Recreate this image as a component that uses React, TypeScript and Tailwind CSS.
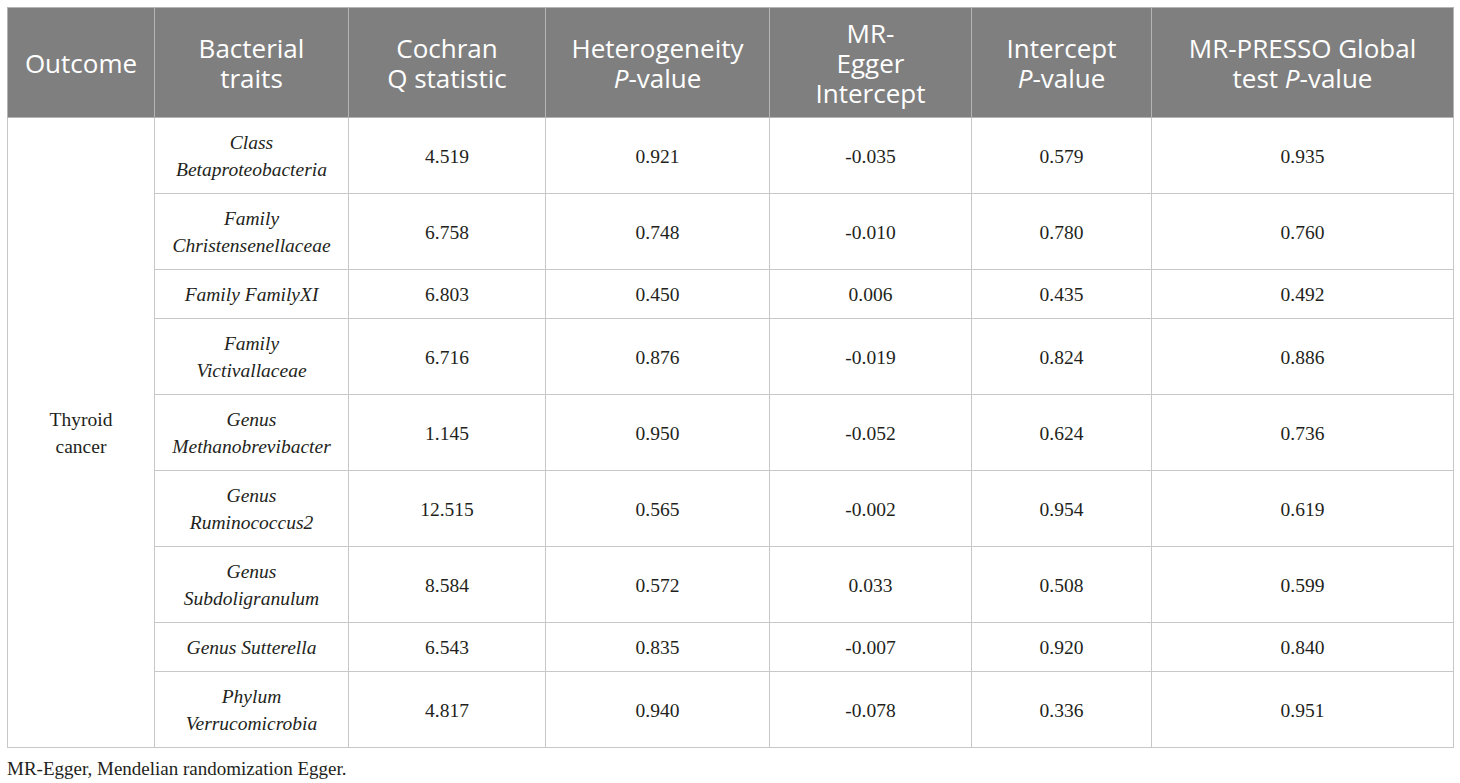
import React from "react";

type Row = { trait: React.ReactNode; q: string; het: string; egg: string; ip: string; presso: string };

const rows: Row[] = [
  { trait: <>Class<br />Betaproteobacteria</>, q: "4.519", het: "0.921", egg: "-0.035", ip: "0.579", presso: "0.935" },
  { trait: <>Family<br />Christensenellaceae</>, q: "6.758", het: "0.748", egg: "-0.010", ip: "0.780", presso: "0.760" },
  { trait: <>Family FamilyXI</>, q: "6.803", het: "0.450", egg: "0.006", ip: "0.435", presso: "0.492" },
  { trait: <>Family<br />Victivallaceae</>, q: "6.716", het: "0.876", egg: "-0.019", ip: "0.824", presso: "0.886" },
  { trait: <>Genus<br />Methanobrevibacter</>, q: "1.145", het: "0.950", egg: "-0.052", ip: "0.624", presso: "0.736" },
  { trait: <>Genus<br />Ruminococcus2</>, q: "12.515", het: "0.565", egg: "-0.002", ip: "0.954", presso: "0.619" },
  { trait: <>Genus<br />Subdoligranulum</>, q: "8.584", het: "0.572", egg: "0.033", ip: "0.508", presso: "0.599" },
  { trait: <>Genus Sutterella</>, q: "6.543", het: "0.835", egg: "-0.007", ip: "0.920", presso: "0.840" },
  { trait: <>Phylum<br />Verrucomicrobia</>, q: "4.817", het: "0.940", egg: "-0.078", ip: "0.336", presso: "0.951" },
];

const th =
  "border border-[#b4b4b4] bg-[#7f7f7f] text-white font-normal text-center align-middle pt-[10px] pb-[9px] px-1 text-[26px] leading-[30px]";
const td =
  "border border-[#c8c8c8] text-center align-middle pt-[11px] pb-[10px] px-1 text-[19.5px] leading-[27px] text-[#231f20]";

export default function App() {
  return (
    <div className="w-[1460px] h-[783px] bg-white pl-[7px] pt-[7px]">
      <table
        className="table-fixed border-collapse w-[1446px] border border-[#c8c8c8]"
        style={{ fontFamily: '"Liberation Serif", serif' }}
      >
        <colgroup>
          <col className="w-[147px]" />
          <col className="w-[194px]" />
          <col className="w-[197px]" />
          <col className="w-[224px]" />
          <col className="w-[202px]" />
          <col className="w-[180px]" />
          <col className="w-[302px]" />
        </colgroup>
        <thead className="font-['Open_Sans',sans-serif]">
          <tr>
            <th className={th}>Outcome</th>
            <th className={th}>Bacterial<br />traits</th>
            <th className={th}>Cochran<br />Q statistic</th>
            <th className={th}>Heterogeneity<br /><i>P</i>-value</th>
            <th className={th}>MR-<br />Egger<br />Intercept</th>
            <th className={th}>Intercept<br /><i>P</i>-value</th>
            <th className={th}>MR-PRESSO Global<br />test <i>P</i>-value</th>
          </tr>
        </thead>
        <tbody>
          {rows.map((r, i) => (
            <tr key={i}>
              {i === 0 && (
                <td rowSpan={rows.length} className={td}>
                  Thyroid<br />cancer
                </td>
              )}
              <td className={td + " italic"}>{r.trait}</td>
              <td className={td}>{r.q}</td>
              <td className={td}>{r.het}</td>
              <td className={td}>{r.egg}</td>
              <td className={td}>{r.ip}</td>
              <td className={td}>{r.presso}</td>
            </tr>
          ))}
        </tbody>
      </table>
      <p
        className="mt-[7px] text-[19px] leading-[27px] text-[#231f20]"
        style={{ fontFamily: '"Liberation Serif", serif' }}
      >
        MR-Egger, Mendelian randomization Egger.
      </p>
    </div>
  );
}
